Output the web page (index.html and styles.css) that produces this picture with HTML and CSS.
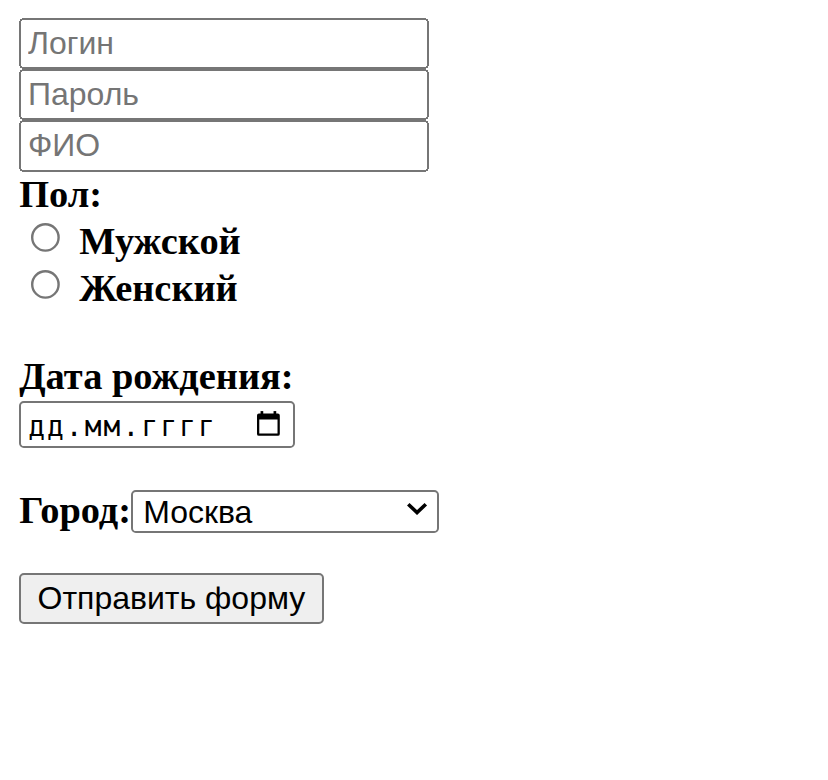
FILE: index.html
```html
<!DOCTYPE html>
<html lang="ru">
<head>
<meta charset="utf-8">
<title>Форма</title>
<link rel="stylesheet" href="styles.css">
</head>
<body class="page">
<form class="form">
  <input class="field" type="text" placeholder="Логин">
  <input class="field" type="password" placeholder="Пароль">
  <input class="field" type="text" placeholder="ФИО">
  <div class="label">Пол:</div>
  <div class="radio-row"><label><input type="radio" name="sex" value="m"> <b>Мужской</b></label></div>
  <div class="radio-row"><label><input type="radio" name="sex" value="f"> <b>Женский</b></label></div>
  <div class="label spaced">Дата рождения:</div>
  <div class="date" role="textbox" aria-label="Дата рождения">
    <span class="date-text">дд.мм.гггг</span>
    <svg class="date-icon" viewBox="0 0 23 25" aria-hidden="true">
      <rect x="3.6" y="0" width="2.7" height="4"/>
      <rect x="16.7" y="0" width="2.7" height="4"/>
      <path fill-rule="evenodd" d="M2 2.5h19a2 2 0 0 1 2 2V23a2 2 0 0 1-2 2H2a2 2 0 0 1-2-2V4.5a2 2 0 0 1 2-2z M2.3 8.5V22.7H20.7V8.5z"/>
    </svg>
  </div>
  <div class="city">
    <b class="city-label">Город:</b>
    <span class="select-wrap">
      <select class="select">
        <option>Москва</option>
        <option>Санкт-Петербург</option>
        <option>Казань</option>
      </select>
      <svg class="chevron" viewBox="0 0 22 13" aria-hidden="true"><path d="M2.2 2.2L11 10.6l8.8-8.4" fill="none" stroke="#000" stroke-width="3.6"/></svg>
    </span>
  </div>
  <button class="submit" type="submit">Отправить форму</button>
</form>
</body>
</html>
```
FILE: styles.css
```css
.page {
  zoom: 2.4;
  margin: 7.5px 8px 8px 8px;
  font-family: "Liberation Serif", "Times New Roman", serif;
  background: #fff;
  color: #000;
}
.form {
  margin: 0;
}
.field {
  display: block;
  box-sizing: border-box;
  width: 170.6px;
  height: 21.33px;
  font-family: "Liberation Sans", Arial, sans-serif;
  font-size: 13.333px;
}
.label {
  font-weight: bold;
}
.spaced {
  margin-top: 18.375px;
}
.date {
  display: flex;
  align-items: center;
  box-sizing: border-box;
  width: 115px;
  height: 19.42px;
  margin-top: 1.25px;
  padding: 0 5.4px 0 2.9px;
  border: 1px solid #767676;
  border-radius: 2px;
  background: #fff;
}
.date-text {
  flex: 1;
  font-family: "DejaVu Sans Mono", "Liberation Mono", monospace;
  font-size: 11.6px;
  letter-spacing: 0.88px;
  padding-top: 1.4px;
  color: #000;
}
.date-icon {
  width: 9.5px;
  height: 10.4px;
  margin-top: -1px;
  fill: #000;
}
.city {
  display: flex;
  align-items: baseline;
  margin-top: 16.5px;
}
.select-wrap {
  position: relative;
  display: inline-block;
}
.select {
  appearance: none;
  -webkit-appearance: none;
  box-sizing: border-box;
  width: 128.5px;
  height: 17.6px;
  margin: 0;
  padding: 0 4.2px;
  border: 1px solid #767676;
  border-radius: 2px;
  background: #fff;
  color: #000;
  font-family: "Liberation Sans", Arial, sans-serif;
  font-size: 13.333px;
}
.chevron {
  position: absolute;
  right: 4.6px;
  top: 5.9px;
  width: 9.2px;
  height: 5.4px;
  pointer-events: none;
}
.submit {
  display: block;
  box-sizing: border-box;
  height: 21.33px;
  margin-top: 16.67px;
  font-family: "Liberation Sans", Arial, sans-serif;
  font-size: 13.333px;
}
```
